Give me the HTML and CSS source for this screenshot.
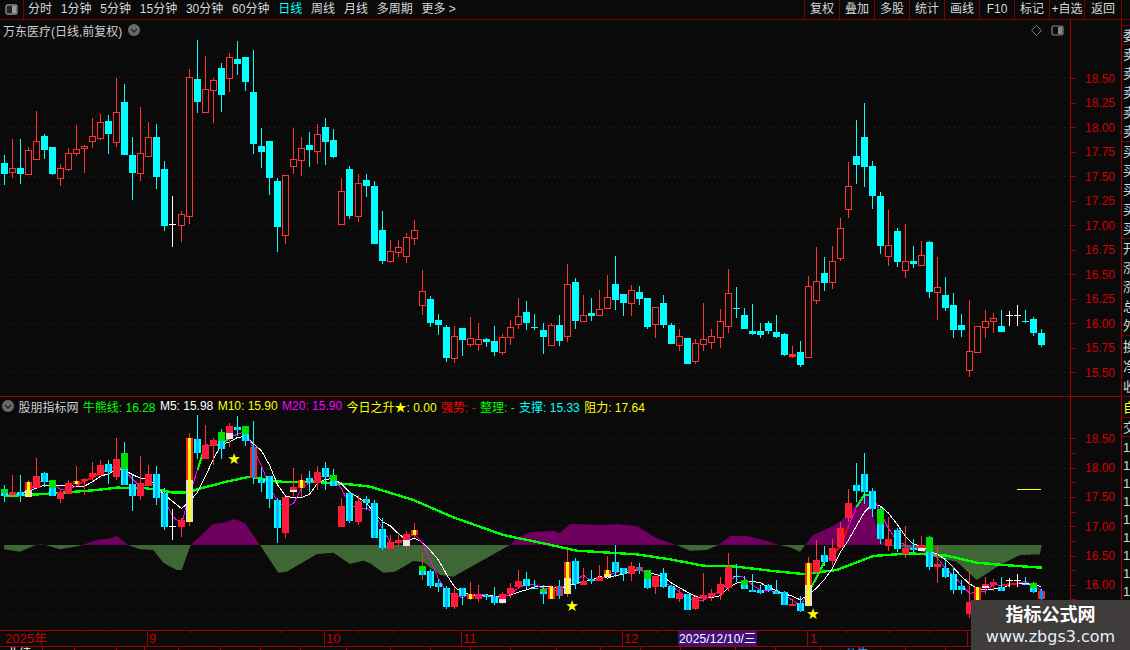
FILE: index.html
```html
<!DOCTYPE html>
<html lang="zh-CN">
<head>
<meta charset="utf-8">
<title>万东医疗 日线</title>
<link rel="stylesheet" href="styles.css">
</head>
<body>
<div class="app">
  <header class="toolbar">
    <div class="panel-toggle">
      <svg class="split-icon" viewBox="0 0 13 11" width="13" height="11"><rect x="1" y="1" width="11" height="9" rx="1.5" fill="#222" stroke="#8a8a8a" stroke-width="1.4"/><rect x="7" y="2" width="4" height="7" fill="#9a9a9a"/></svg>
    </div>
    <nav class="periods">
      <span>分时</span><span>1分钟</span><span>5分钟</span><span>15分钟</span><span>30分钟</span><span>60分钟</span><span class="active">日线</span><span>周线</span><span>月线</span><span>多周期</span><span>更多 &gt;</span>
    </nav>
    <nav class="actions">
      <span>复权</span><span>叠加</span><span>多股</span><span>统计</span><span>画线</span><span>F10</span><span>标记</span><span>+自选</span><span>返回</span>
    </nav>
  </header>

  <div class="workspace">
    <div class="panes">
      <section class="pane pane-main">
        <div class="pane-head">
          <span class="stock">万东医疗(日线,前复权)</span>
          <svg class="drop" viewBox="0 0 12 12" width="12" height="12"><circle cx="6" cy="6" r="6" fill="#6a6a6a"/><path d="M3 5l3 3 3-3" fill="none" stroke="#222" stroke-width="1.3"/></svg>
          <span class="pane-tools">
            <svg viewBox="0 0 11 11" width="11" height="11"><path d="M5.5 .5l5 5-5 5-5-5z" fill="none" stroke="#777"/></svg>
            <svg viewBox="0 0 13 11" width="13" height="11"><rect x="1" y="1" width="11" height="9" rx="1.5" fill="none" stroke="#8a8a8a" stroke-width="1.2"/><rect x="7" y="2" width="4" height="7" fill="#8a8a8a"/></svg>
          </span>
        </div>
        <svg id="main-plot" class="plot" viewBox="0 20 1070 376" width="1070" height="376"></svg>
        <svg id="main-axis" class="axis" viewBox="1070 20 52 376" width="52" height="376"></svg>
      </section>

      <section class="pane pane-sub">
        <div class="pane-head legend">
          <svg class="drop" viewBox="0 0 12 12" width="12" height="12"><circle cx="6" cy="6" r="6" fill="#6a6a6a"/><path d="M3 5l3 3 3-3" fill="none" stroke="#222" stroke-width="1.3"/></svg>
          <span class="stock">股朋指标网</span>
          <span class="c-green">牛熊线: 16.28</span>
          <span class="c-white">M5: 15.98</span>
          <span class="c-yellow">M10: 15.90</span>
          <span class="c-magenta">M20: 15.90</span>
          <span class="c-yellow">今日之升★: 0.00</span>
          <span class="c-red">强势: -</span>
          <span class="c-green">整理: -</span>
          <span class="c-cyan">支撑: 15.33</span>
          <span class="c-yellow">阻力: 17.64</span>
        </div>
        <svg id="sub-plot" class="plot" viewBox="0 397 1070 233" width="1070" height="233"></svg>
        <svg id="sub-axis" class="axis" viewBox="1070 397 52 233" width="52" height="233"></svg>
      </section>

      <svg id="timeline" class="timeline" viewBox="0 630 1122 20" width="1122" height="20"></svg>
    </div>

    <aside class="quote-strip">
      <div class="cell h6"></div>
      <div class="cell h19"><span>委</span></div>
      <div class="cell h97"><span>卖</span><span>卖</span><span>卖</span><span>卖</span><span>卖</span></div>
      <div class="cell h97"><span>买</span><span>买</span><span>买</span><span>买</span><span>买</span></div>
      <div class="cell h97"><span>开</span><span>涨</span><span>涨</span><span>总</span><span>外</span></div>
      <div class="cell h61"><span>换</span><span>净</span><span>收</span></div>
      <div class="cell h21 yellow"><span>自</span></div>
      <div class="cell h19"><span>交</span></div>
      <div class="cell rest"><span>1</span><span>1</span><span>1</span><span>1</span><span>1</span><span>1</span><span>1</span><span>1</span><span>1</span></div>
    </aside>
  </div>

  <div class="watermark">
    <strong>指标公式网</strong>
    <span>www.zbgs3.com</span>
  </div>
</div>
<script src="chart.js"></script>
</body>
</html>
```

FILE: styles.css
```css
* { box-sizing: border-box; }
html, body { margin: 0; padding: 0; background: #0a0a0a; }
body { font-family: "Liberation Sans", "Noto Sans CJK SC", sans-serif; font-size: 12px; color: #d8d8d8; }
.app { position: relative; width: 1130px; height: 650px; overflow: hidden; display: flex; flex-direction: column; background: #0a0a0a; }

.toolbar { flex: none; height: 20px; display: flex; align-items: stretch; border-bottom: 1px solid #7a0000; }
.panel-toggle { width: 24px; border-right: 1px solid #7a0000; display: flex; align-items: center; justify-content: center; }
.split-icon { display: block; }
.periods { display: flex; align-items: center; gap: 8.8px; padding-left: 4px; }
.periods span { white-space: nowrap; line-height: 19px; }
.periods .active { color: #00ffff; }
.actions { margin-left: auto; display: flex; padding-right: 8px; }
.actions span { width: 35px; text-align: center; line-height: 19px; border-left: 1px solid #7a0000; white-space: nowrap; letter-spacing: 0; }
.actions span:last-child { width: 38px; border-right: 1px solid #7a0000; }

.workspace { flex: 1; min-height: 0; display: flex; }
.panes { width: 1122px; flex: none; display: flex; flex-direction: column; }
.quote-strip { width: 8px; flex: none; overflow: hidden; display: flex; flex-direction: column; color: #d8d8d8; font-size: 13px; }
.cell { flex: none; display: flex; flex-direction: column; justify-content: space-around; align-items: flex-start; border-bottom: 1px solid #7a0000; overflow: hidden; line-height: 15px; padding-left: 1px; }
.cell span { display: block; white-space: nowrap; }
.h6 { height: 6px; } .h19 { height: 19px; } .h21 { height: 21px; } .h61 { height: 61px; } .h97 { height: 97px; }
.yellow { color: #ffff00; }
.rest { flex: 1; border-bottom: 0; height: 160px; justify-content: flex-start; gap: 3px; padding-top: 3px; }

.pane { position: relative; flex: none; display: grid; grid-template-columns: 1070px 52px; }
.pane-main { height: 377px; border-bottom: 1px solid #a00000; }
.pane-sub { height: 233px; }
.plot, .axis { display: block; }
.pane-head { position: absolute; left: 3px; top: 2px; right: 56px; height: 16px; display: flex; align-items: center; gap: 6px; white-space: nowrap; }
.stock { color: #d0d0d0; }
.pane-tools { margin-left: auto; display: flex; align-items: center; gap: 9px; padding-right: 2px; }
.legend { left: 2px; top: 1px; gap: 4.4px; }
.c-green { color: #00ff00; } .c-white { color: #ffffff; } .c-yellow { color: #ffff00; }
.c-magenta { color: #ff00ff; } .c-red { color: #ff0000; } .c-cyan { color: #00ffff; }
.timeline { display: block; flex: none; }

.watermark { position: absolute; right: 0; bottom: 0; width: 159px; height: 50px; background: #403c3c; display: flex; flex-direction: column; align-items: center; justify-content: center; gap: 1px; color: #fff; }
.watermark strong { font-size: 18px; line-height: 22px; }
.watermark span { font-family: "DejaVu Sans", sans-serif; font-size: 16px; line-height: 20px; color: #e6f0ff; }
```

FILE: chart.js
```js
var NS = 'http://www.w3.org/2000/svg';
function el(parent, name, attrs, text) {
  var n = document.createElementNS(NS, name);
  for (var k in attrs) n.setAttribute(k, attrs[k]);
  if (text != null) n.textContent = text;
  parent.appendChild(n);
  return n;
}
function rect(p, x, y, w, h, fill) { return el(p, 'rect', { x: x, y: y, width: w, height: h, fill: fill, 'shape-rendering': 'crispEdges' }); }

// [bodyTop, bodyBottom, wickTop, wickBottom, colour] measured on 3x crops
var groups = [
 [30, [[399,429,376,465,'c'],[414,425,327,443,'r'],[414,429,327,461,'c'],[361,431,351,434,'r'],[334,386,243,386,'r'],[318,357,312,387,'c'],[351,429,351,434,'c'],[415,443,402,467,'r'],[370,416,354,422,'r'],[358,368,285,377,'r'],[349,355,345,429,'r'],[319,332,264,354,'r'],[277,323,252,330,'r'],[273,309,255,372,'c'],[247,335,144,351,'r'],[216,372,162,375,'c'],[375,426,321,510,'c'],[370,428,231,453,'r'],[322,377,276,377,'r'],[321,438,282,477,'c'],[417,585,393,603,'c'],[583,583,498,651,'w'],[553,584,544,636,'r'],[142,557,118,582,'r'],[147,213,30,249,'c'],[178,245,78,245,'r'],[151,179,144,279,'r'],[114,192,99,246,'c'],[82,143,69,186,'r'],[87,99,33,135,'c'],[81,153,81,183,'c'],[186,339,60,372,'c'],[348,363,294,414,'c'],[333,441,333,495,'c'],[453,588,444,666,'c'],[436,614,436,642,'r']]],
 [100, [[178,197,84,222,'r'],[145,179,111,228,'r'],[135,147,96,201,'c'],[103,152,72,192,'r'],[81,123,54,195,'c'],[120,168,87,174,'c'],[274,371,234,371,'r'],[207,345,198,357,'c'],[250,347,222,366,'r'],[240,255,222,291,'c'],[258,429,243,432,'c'],[390,480,333,492,'c'],[454,482,420,489,'r'],[442,455,420,471,'r'],[412,467,399,489,'r'],[391,413,360,435,'r'],[574,614,510,645,'r'],[597,666,588,681,'c'],[660,672,642,705,'c'],[681,771,675,786,'c'],[709,773,678,789,'r'],[684,717,684,768,'c'],[715,731,651,741,'r'],[718,731,669,753,'r'],[717,723,714,741,'c'],[723,753,678,768,'c'],[712,755,702,765,'r'],[682,710,660,735,'r'],[649,671,594,687,'r'],[636,666,603,690,'c'],[682,682,642,690,'c'],[690,708,669,762,'c'],[676,734,669,734,'r'],[675,720,645,738,'c'],[553,707,492,726,'r'],[546,660,534,687,'c'],[646,662,585,662,'r']]],
 [100, [[639,645,594,663,'c'],[628,644,570,648,'r'],[592,623,525,623,'r'],[552,597,468,630,'c'],[582,606,582,648,'c'],[571,608,555,648,'r'],[576,594,558,615,'c'],[594,678,594,687,'c'],[622,671,622,714,'r'],[609,672,585,684,'c'],[675,729,669,729,'c'],[709,734,687,753,'r'],[714,789,714,789,'c'],[730,782,717,792,'r'],[718,731,609,753,'r'],[709,725,687,747,'r'],[664,710,627,744,'r'],[580,677,507,699,'r'],[625,625,561,654,'c'],[645,684,624,684,'c'],[693,699,612,705,'c'],[693,702,669,714,'c'],[669,690,663,702,'c'],[696,708,645,714,'c'],[702,762,699,768,'c'],[762,768,738,774,'R'],[756,792,723,801,'c'],[559,770,528,770,'r'],[544,599,441,612,'r'],[519,546,471,573,'c'],[484,545,438,567,'r'],[385,473,354,483,'r'],[259,326,186,354,'r'],[168,192,60,252,'c'],[111,198,9,261,'c'],[198,285,183,327,'c'],[288,435,276,462,'c']]],
 [90, [[466,497,360,528,'r'],[423,513,414,531,'c'],[514,539,402,564,'r'],[513,519,468,534,'c'],[496,524,453,524,'r'],[456,603,453,624,'c'],[592,605,501,690,'r'],[615,651,561,663,'c'],[645,717,609,744,'c'],[705,717,672,741,'c'],[784,839,630,861,'r'],[709,785,709,789,'r'],[694,710,660,744,'r'],[685,692,669,729,'r'],[708,723,660,723,'c'],[675,675,663,708,'w'],[674,674,645,708,'w'],[693,693,660,699,'c'],[687,726,681,738,'c'],[729,762,717,771,'c']]]
];
var candles = [];
groups.forEach(function (g) {
  g[1].forEach(function (d) {
    var i = candles.length;
    candles.push({ i: i, x: 4 + 8 * i + Math.floor((i + 0.5) / 22.2), t: g[0] + d[0] / 3, b: g[0] + d[1] / 3, h: g[0] + d[2] / 3, l: g[0] + d[3] / 3, k: d[4] });
  });
});
var COLORS = { c: '#00ffff', r: '#ff3333', R: '#ff3333', w: '#ffffff' };

function drawMainCandle(p, c) {
  var y1 = Math.round(c.t), y2 = Math.round(c.b), col = COLORS[c.k];
  rect(p, c.x, Math.round(c.h), 1, Math.max(1, Math.round(c.l) - Math.round(c.h)), col);
  if (y2 - y1 < 1) { rect(p, c.x - 3, y1, 7, 1, col); return; }
  if (c.k === 'r') {
    rect(p, c.x - 2, y1 + 1, 5, Math.max(0, y2 - y1 - 1), '#0a0a0a');
    rect(p, c.x - 3, y1, 7, 1, col); rect(p, c.x - 3, y2, 7, 1, col);
    rect(p, c.x - 3, y1, 1, y2 - y1, col); rect(p, c.x + 3, y1, 1, y2 - y1, col);
  } else { rect(p, c.x - 3, y1, 7, y2 - y1 + 1, col); }
}

function gridLines(p, ys) {
  ys.forEach(function (y) {
    el(p, 'line', { x1: 4, y1: y + 0.5, x2: 1070, y2: y + 0.5, stroke: '#5e1010', 'stroke-dasharray': '1 4', 'stroke-width': 1, 'shape-rendering': 'crispEdges' });
  });
}
function axis(p, x0, top, bottom, ticks, labels) {
  rect(p, 1070, top, 1, bottom - top, '#a00000');
  ticks.forEach(function (y) { rect(p, 1071, Math.round(y), 5, 1, '#a00000'); });
  labels.forEach(function (l) { el(p, 'text', { x: 1085, y: l[0] + 4.5, fill: '#d00000', 'font-size': 12, 'font-family': '"Liberation Sans", sans-serif' }, l[1]); });
  rect(p, 1121, top, 1, bottom - top, '#a00000');
}

var mainPlot = document.getElementById('main-plot');
gridLines(mainPlot, [77, 127, 176, 225, 274, 323, 372]);
candles.forEach(function (c) { drawMainCandle(mainPlot, c); });

var mainAxis = document.getElementById('main-axis');
var mt = [], ml = [];
['18.50','18.25','18.00','17.75','17.50','17.25','17.00','16.75','16.50','16.25','16.00','15.75','15.50'].forEach(function (t, n) {
  var y = 78 + n * 24.5; mt.push(y); ml.push([y, t]);
});
axis(mainAxis, 1070, 20, 396, mt, ml);

// lower panel
var sub = document.getElementById('sub-plot');
function sy(y) { return 585.3 + (y - 323.3) * 0.6; }
gridLines(sub, [438, 468, 497, 526, 555, 585, 614]);

var defs = el(sub, 'defs', {});
var cp1 = el(defs, 'clipPath', { id: 'above' }); rect(cp1, 0, 397, 1070, 148, '#000');
var cp2 = el(defs, 'clipPath', { id: 'below' }); rect(cp2, 0, 545, 1070, 90, '#000');
function pts(ox, oy, list) { return list.map(function (q) { return [ox + q[0] / 3, oy + q[1] / 3]; }); }
var profile = [[4, 545]].concat(
  pts(0, 420, [[12,388],[60,395],[100,378],[120,372],[140,376],[180,388],[240,377],[290,360],[330,355],[350,348],[385,375],[420,388],[460,390],[490,428],[530,450],[545,450],[572,375],[640,312],[665,310],[705,297],[735,310],[780,375],[835,458],[860,455],[950,403],[1000,398],[1050,432],[1090,422],[1110,430]]),
  pts(370, 500, [[40,218],[75,215],[130,183],[160,187],[210,225],[250,230],[340,180],[410,140],[420,135],[440,115],[480,97],[550,92],[570,98],[600,72],[700,75],[740,72],[800,78],[860,115],[920,135],[960,152],[1010,150],[1045,135],[1080,108],[1130,108],[1200,125]]),
  pts(770, 420, [[0,367],[30,376],[60,382],[90,395],[105,376],[130,345],[190,318],[215,300],[260,250],[290,225],[300,250],[320,320],[335,365],[355,376],[400,382],[450,392],[490,410],[560,425],[620,480],[690,435],[750,405],[810,403],[815,376]])
);
var polyStr = profile.map(function (q) { return q[0].toFixed(1) + ',' + q[1].toFixed(1); }).join(' ') + ' 1042,545';
el(sub, 'polygon', { points: polyStr, fill: '#6f0060', 'clip-path': 'url(#above)' });
el(sub, 'polygon', { points: polyStr, fill: '#3f6635', 'clip-path': 'url(#below)' });

// thick trend line
var trend = [[4,496]].concat(
  pts(0, 420, [[100,224],[190,218],[290,210],[350,203],[430,204],[490,212],[520,218],[560,218],[610,203],[680,185],[750,170],[830,185],[950,186],[1040,192],[1110,200]]),
  pts(370, 500, [[130,0],[250,52],[400,105],[520,130],[620,152],[800,163],[900,178],[1000,197],[1100,200],[1200,212]]),
  pts(770, 420, [[100,462],[200,450],[310,408],[420,400],[530,407],[620,428],[700,435],[815,443]])
);
function pline(p, list, color, w) {
  el(p, 'polyline', { points: list.map(function (q) { return q[0] + ',' + q[1]; }).join(' '), fill: 'none', stroke: color, 'stroke-width': w, 'shape-rendering': 'crispEdges', 'stroke-linejoin': 'round' });
}
pline(sub, trend, '#00ff00', 2.4);

// averages of close
var closes = candles.map(function (c) { return sy(c.k === 'c' ? c.b : c.t); });
function sma(n) {
  return candles.map(function (c, i) {
    var a = Math.max(0, i - n + 1), s = 0;
    for (var j = a; j <= i; j++) s += closes[j];
    return [c.x + 0.5, s / (i - a + 1)];
  });
}
var ma3 = sma(3), ma5 = sma(5);
pline(sub, ma5, '#ffffff', 1);
pline(sub, ma3, '#ff00ff', 1);
[[9,12,'#ff0000'],[24,25,'#00ff00'],[26,28,'#00ff00'],[100,102,'#00ff00'],[103,105,'#ff0000'],[106,108,'#00ff00'],[124,126,'#ff0000']].forEach(function (s) {
  pline(sub, ma3.slice(s[0], s[1] + 1), s[2], 2);
});

// lower panel candles with signal overlays
var KIND = { 0:'G',3:'Y',6:'G',9:'y',15:'G',23:'Y',27:'G',28:'W',30:'G',31:'B',36:'W',37:'y',41:'G',50:'W',51:'y',52:'G',58:'y',62:'W',67:'G',68:'y',69:'B',70:'Y',75:'Y',79:'B',80:'G',92:'G',100:'Y',109:'G',114:'W',115:'G',121:'y',122:'W',128:'G',129:'B' };
var PINK = '#ff1450', BLUE = '#00b8ff', CY = '#00ffff', RD = '#ff2222';
function two(p, x, y, h, outer, inner) {
  if (h <= 0) return;
  rect(p, x - 3, y, 7, h, outer);
  rect(p, x - 1, y, 3, h, inner);
}
candles.forEach(function (c) {
  var y1 = Math.round(sy(c.t)), y2 = Math.round(sy(c.b)), kind = KIND[c.i], h = y2 - y1 + 1;
  var wick = c.k === 'c' ? CY : (c.k === 'w' ? '#ffffff' : '#ff3333');
  rect(sub, c.x, Math.round(sy(c.h)), 1, Math.max(1, Math.round(sy(c.l)) - Math.round(sy(c.h))), wick);
  if (y2 - y1 < 1) { rect(sub, c.x - 3, y1, 7, 1, c.k === 'c' ? CY : wick); return; }
  var mid = y1 + Math.round(h / 2);
  if (kind === 'Y') { two(sub, c.x, y1, mid - y1, RD, '#ffff00'); two(sub, c.x, mid, y1 + h - mid, '#dcdcdc', '#ffff00'); }
  else if (kind === 'y') { two(sub, c.x, y1, h, RD, '#ffff00'); }
  else if (kind === 'W') { two(sub, c.x, y1, mid - y1, RD, PINK); rect(sub, c.x - 3, mid, 7, y1 + h - mid, '#e8e8e8'); }
  else if (kind === 'G') { rect(sub, c.x - 3, y1, 7, mid - y1, '#00e000'); two(sub, c.x, mid, y1 + h - mid, CY, BLUE); }
  else if (kind === 'B') { two(sub, c.x, y1, h, RD, '#0090ff'); }
  else if (c.k === 'c') { two(sub, c.x, y1, h, CY, BLUE); }
  else { two(sub, c.x, y1, h, RD, PINK); }
});

// stars and resistance mark
[[234,458],[572,605],[813,613]].forEach(function (s) {
  el(sub, 'text', { x: s[0], y: s[1] + 5.5, fill: '#ffff00', 'font-size': 15, 'text-anchor': 'middle', 'font-family': '"DejaVu Sans", sans-serif' }, '★');
});
rect(sub, 1017, 489, 24, 1, '#ffff00');

var subAxis = document.getElementById('sub-axis');
var st = [], sl = [];
['18.50','18.00','17.50','17.00','16.50','16.00'].forEach(function (t, n) {
  var y = 438.3 + n * 29.3; st.push(y); sl.push([y, t]); st.push(y + 14.6);
});
axis(subAxis, 1070, 397, 630, st, sl);

// time axis
var tl = document.getElementById('timeline');
rect(tl, 0, 630, 1122, 1, '#a00000');
rect(tl, 0, 646, 1122, 1, '#a00000');
rect(tl, 1070, 630, 1, 16, '#a00000');
rect(tl, 1121, 630, 1, 20, '#a00000');
[147, 324, 461, 622, 807, 967].forEach(function (x) { rect(tl, x, 631, 1, 15, '#a00000'); });
[42,84,107,191,236,280,358,393,427,492,542,582,656,847,888,929,1005].forEach(function (x) { rect(tl, x, 631, 1, 2, '#a00000'); });
[42,74,116,144,178,220,260,300,346,390,430,470,510,556,600,640,680,735,775,820,858,905,945].forEach(function (x) { rect(tl, x, 647, 1, 3, '#a00000'); });
[[5,'2025年'],[149,'9'],[326,'10'],[463,'11'],[624,'12'],[810,'1']].forEach(function (l) {
  el(tl, 'text', { x: l[0], y: 643, fill: '#c80000', 'font-size': 13, 'font-family': '"Liberation Sans", "Noto Sans CJK SC", sans-serif' }, l[1]);
});
rect(tl, 678, 631, 79, 15, '#40107a');
el(tl, 'text', { x: 679, y: 643, fill: '#ffffff', 'font-size': 12, textLength: 77, 'font-family': '"Liberation Sans", "Noto Sans CJK SC", sans-serif' }, '2025/12/10/三');
el(tl, 'text', { x: 7, y: 658, fill: '#ffffff', 'font-size': 12, 'font-family': '"Noto Sans CJK SC", sans-serif' }, '业绩');
el(tl, 'text', { x: 845, y: 658, fill: '#3a9cff', 'font-size': 12, 'font-family': '"Noto Sans CJK SC", sans-serif' }, '公告');
```
